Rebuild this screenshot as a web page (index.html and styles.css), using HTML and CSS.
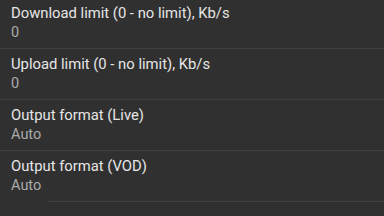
FILE: index.html
```html
<!DOCTYPE html>
<html lang="en">
<head>
    <meta charset="UTF-8">
    <meta name="viewport" content="width=device-width, initial-scale=1.0">
    <title>Settings</title>
    <link rel="stylesheet" href="styles.css">
</head>
<body>
    <div class="pref-list">
        <div class="pref">
            <p class="pref-title">Download limit (0 - no limit), Kb/s</p>
            <p class="pref-value">0</p>
        </div>
        <div class="pref">
            <p class="pref-title">Upload limit (0 - no limit), Kb/s</p>
            <p class="pref-value">0</p>
        </div>
        <div class="pref">
            <p class="pref-title">Output format (Live)</p>
            <p class="pref-value">Auto</p>
        </div>
        <div class="pref last">
            <p class="pref-title">Output format (VOD)</p>
            <p class="pref-value">Auto</p>
        </div>
    </div>
</body>
</html>
```

FILE: styles.css
```css
* {
    margin: 0;
    padding: 0;
    box-sizing: border-box;
}
html, body {
    height: 100%;
}
body {
    background: #303030;
    font-family: Roboto, "Noto Sans", sans-serif;
    -webkit-font-smoothing: antialiased;
    overflow: hidden;
}
.pref-list {
    /* list is scrolled a little */
    margin-top: -2px;
}
.pref {
    height: 51px;
    padding: 5px 11px 0;
    border-bottom: 1px solid #414141;
}
.pref.last {
    border-bottom: none;
    position: relative;
}
.pref.last::after {
    content: "";
    position: absolute;
    left: 48px;
    right: 0;
    bottom: 0;
    height: 1px;
    background: #414141;
}
.pref-title {
    font-size: 14.8px;
    line-height: 20px;
    color: #e6e6e6;
}
.pref-value {
    margin-top: 1px;
    font-size: 14.5px;
    line-height: 18px;
    color: #ababab;
}
```
